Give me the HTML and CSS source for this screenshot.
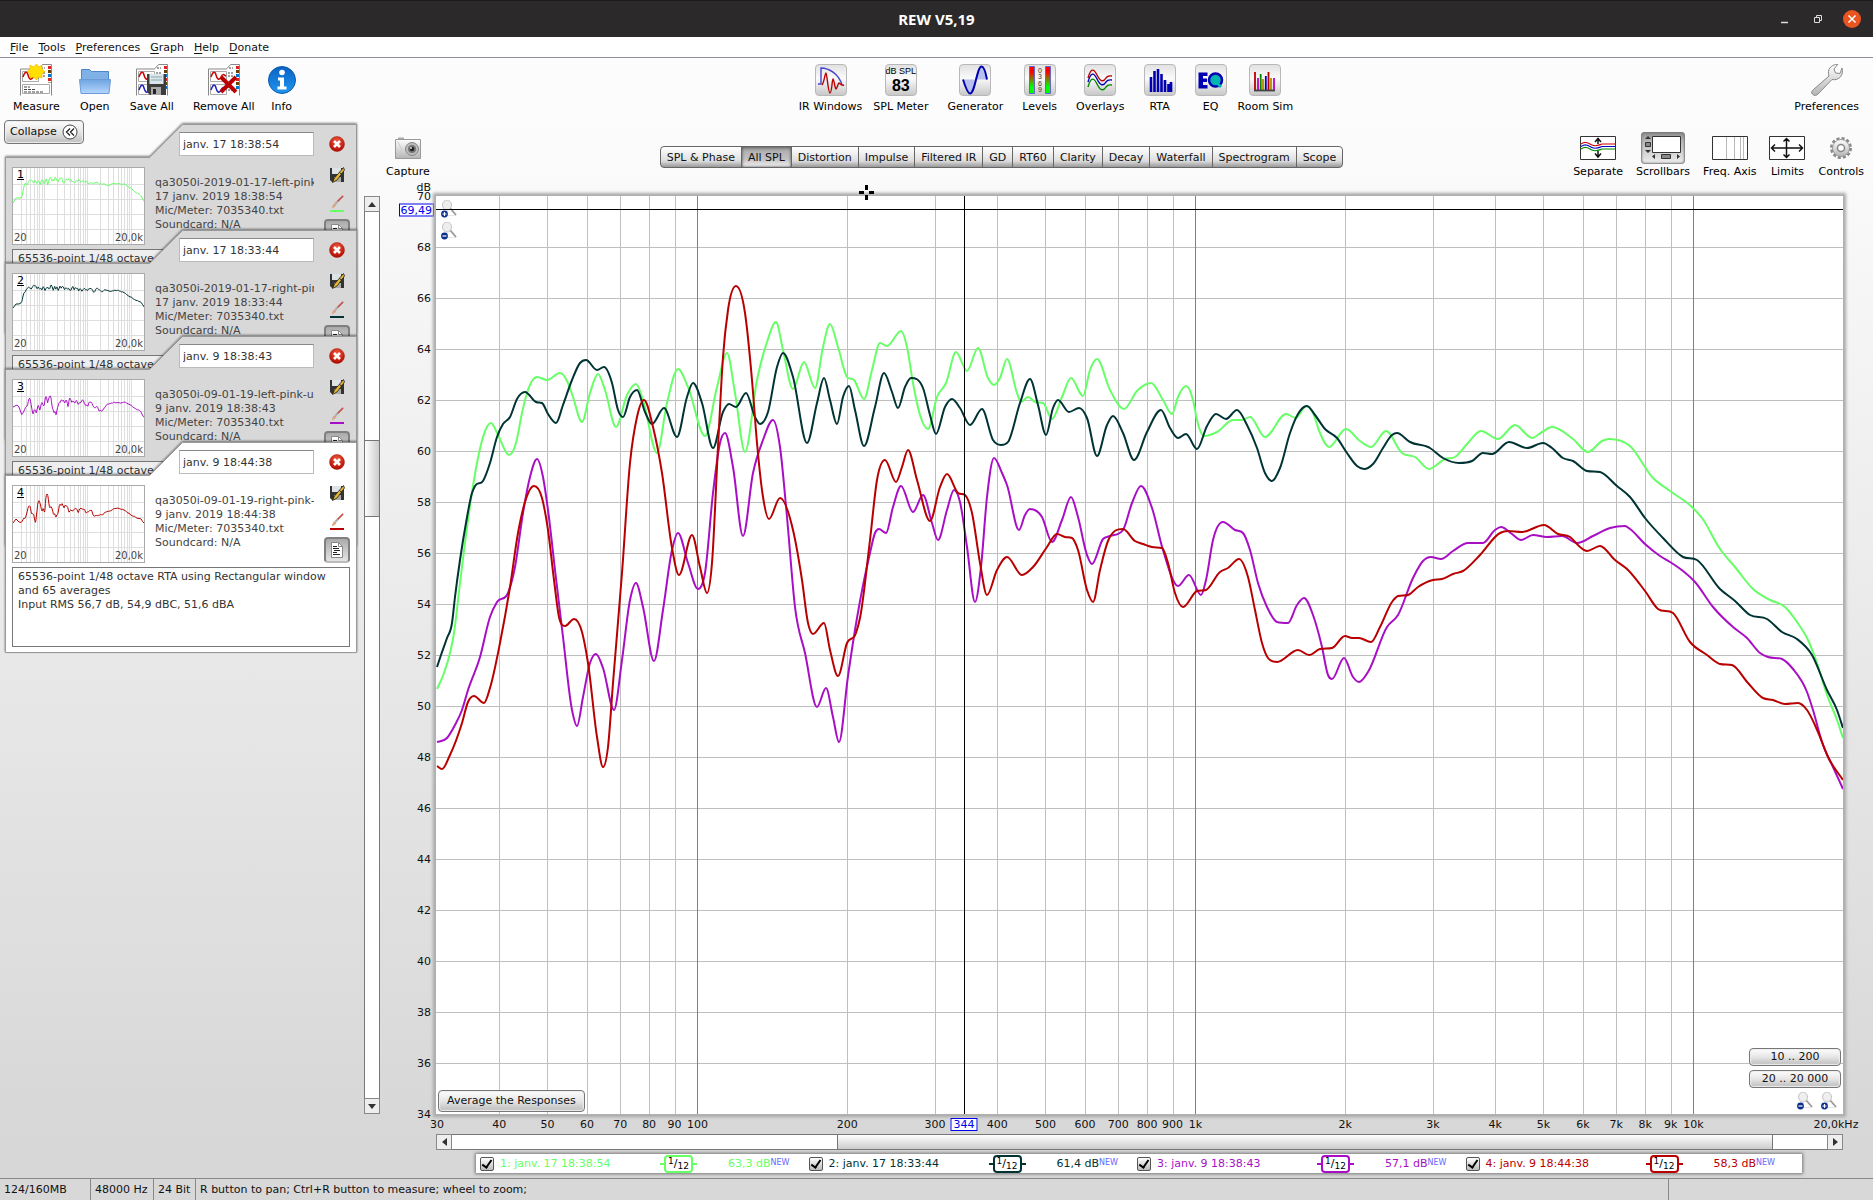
FILE: index.html
```html
<!DOCTYPE html>
<html lang="en">
<head>
    <meta charset="UTF-8">
    <meta name="viewport" content="width=device-width, initial-scale=1.0">
    <title>REW V5,19</title>
    <link rel="stylesheet" href="styles.css">
</head>
<body>

    <!-- Shared icons -->
    <svg class="defs" width="0" height="0">
        <defs>
            <linearGradient id="gMetal" x1="0" y1="0" x2="0" y2="1">
                <stop offset="0" stop-color="#fff"/><stop offset="1" stop-color="#b4b4b4"/>
            </linearGradient>
            <linearGradient id="gFolder" x1="0" y1="0" x2="0" y2="1">
                <stop offset="0" stop-color="#6fa4e0"/><stop offset="1" stop-color="#b4d6ff"/>
            </linearGradient>
            <linearGradient id="gInfo" x1="0" y1="0" x2="0" y2="1">
                <stop offset="0" stop-color="#0a62c4"/><stop offset="1" stop-color="#1f96ee"/>
            </linearGradient>
            <linearGradient id="gLevel" x1="0" y1="0" x2="0" y2="1">
                <stop offset="0.2" stop-color="#f00"/><stop offset="0.75" stop-color="#0f0"/>
            </linearGradient>
            <radialGradient id="gDelete" cx="0.5" cy="0.3" r="0.7">
                <stop offset="0" stop-color="#f0583c"/><stop offset="1" stop-color="#b00800"/>
            </radialGradient>
        </defs>
        <symbol id="i-sheet" viewBox="0 0 32 32">
            <path d="M.5 31.500V5h18l4-4.500h9v31" fill="#fff" stroke="#888"/>
            <path d="M2.500 7.500h16v10h-16zM2.500 20.500h16v10h-16z" fill="none" stroke="#aaa"/>
            <path d="M3 13c2-6 4-6 5-2s3 6 5 2 3-2 5-1" fill="none" stroke="#c00" stroke-width="1.500"/>
            <path d="M3 26c2-6 4-6 5-2s3 6 5 2 3-2 5-1" fill="none" stroke="#22b" stroke-width="1.500"/>
            <path d="M21 4h4M20 9h5M20 12h6M20 23h5M20 26h6" stroke="#444" stroke-dasharray="2 1"/>
            <path d="M28 3.500h3M28 15.500h3" stroke="#d22" stroke-width="3"/>
            <path d="M28 7.500h3M28 19.500h3" stroke="#640" stroke-width="3"/>
            <path d="M28 11.500h3M28 23.500h3" stroke="#07c" stroke-width="3"/>
        </symbol>
        <symbol id="i-delete" viewBox="0 0 16 16">
            <circle cx="8" cy="8" r="7.500" fill="url(#gDelete)" stroke="#a02010" stroke-width=".5"/>
            <path d="M5 5l6 6M11 5l-6 6" stroke="#fff" stroke-width="2.600"/>
        </symbol>
        <symbol id="i-save" viewBox="0 0 16 16">
            <path d="M1 1h14v14H3l-2-2z" fill="#333"/>
            <path d="M3 1h9v6H3z" fill="#dde3e6"/>
            <path d="M5 10h7v5H5z" fill="#aaa"/>
            <path d="M14.500 0.500L5.500 11l-2 4.500 4.500-2.500 7.500-10z" fill="#e8b830" stroke="#222" stroke-width=".8"/>
            <path d="M10.500 5.500l2.500 1.800" stroke="#222"/>
        </symbol>
        <symbol id="i-brush" viewBox="0 0 16 16">
            <path d="M2 15c1-3 1-5 4-6l1.500 1.500C7 13 4 14.500 2 15z" fill="#d9a58a"/>
            <path d="M6.500 9.500l3-3" stroke="#aaa" stroke-width="2.500"/>
            <path d="M9 7L15 1" stroke="#c3504a" stroke-width="1.800"/>
        </symbol>
        <symbol id="i-doc" viewBox="0 0 16 16">
            <path d="M2.500.5h7l4 4v11h-11z" fill="#fff" stroke="#888"/>
            <path d="M9.500.5v4h4" fill="none" stroke="#888"/>
            <path d="M4 4.500h4M4 6.500h6M5 8.500h6M4 10.500h4M4 12.500h7" stroke="#222"/>
        </symbol>
        <symbol id="i-lens" viewBox="0 0 16 16">
            <path d="M9 8l6 7" stroke="#999" stroke-width="1.800"/>
            <path d="M5 16h10" stroke="#ccc"/>
            <ellipse cx="6" cy="5" rx="4.500" ry="5" fill="#eee" stroke="#c4c4c4"/>
        </symbol>
        <symbol id="i-zoomin" viewBox="0 0 16 18">
            <use href="#i-lens" width="16" height="16"/>
            <circle cx="3.500" cy="14" r="3.400" fill="#0a2f8c"/>
            <path d="M1.500 14h4M3.500 12v4" stroke="#fff" stroke-width="1.200"/>
        </symbol>
        <symbol id="i-zoomout" viewBox="0 0 16 18">
            <use href="#i-lens" width="16" height="16"/>
            <circle cx="3.500" cy="14" r="3.400" fill="#0a2f8c"/>
            <path d="M1.500 14h4" stroke="#fff" stroke-width="1.200"/>
        </symbol>
        <symbol id="i-tab" viewBox="0 0 353 211" preserveAspectRatio="none">
            <path d="M.5 210.500V33.500H145L178 .5H352.500V210.500z" stroke="#999"/>
        </symbol>
    </svg>

    <header class="titlebar">
        <h1>REW V5,19</h1>
        <div class="window-buttons">
            <button aria-label="Minimize"><svg width="10" height="10"><path d="M1 8.500h7" stroke="#ddd" stroke-width="1.500"/></svg></button>
            <button aria-label="Restore"><svg width="10" height="10"><path d="M3.500 3V1.500h5v5H7M1.500 3.500h5v5h-5z" fill="none" stroke="#ddd"/></svg></button>
            <button class="close" aria-label="Close"><svg width="10" height="10"><path d="M1.500 1.500l7 7M8.500 1.500l-7 7" stroke="#fff" stroke-width="1.500"/></svg></button>
        </div>
    </header>

    <nav class="menubar">
        <a href="#"><u>F</u>ile</a>
        <a href="#"><u>T</u>ools</a>
        <a href="#"><u>P</u>references</a>
        <a href="#"><u>G</u>raph</a>
        <a href="#"><u>H</u>elp</a>
        <a href="#"><u>D</u>onate</a>
    </nav>

    <div class="toolbar">
        <div class="tools tools-left">
            <button class="tool">
                <svg width="32" height="32"><use href="#i-sheet"/><path d="M1 18.500h30v12.500H1z" fill="#fff"/><path d="M2.500 20.500h27v9h-27z" fill="#fff" stroke="#aaa"/><path d="M4 23h6M4 25.500h12M4 28h20" stroke="#444" stroke-dasharray="3 1"/><path d="M16.500 0l2 3 3.500-2v4l3 2.500-3 2.500v4l-3.500-1-2 3-3-3-3.500 1v-4L7 7.500 10 5V1l3.500 2z" fill="#ffe000" stroke="#f0b000" stroke-width=".6"/></svg>
                Measure
            </button>
            <button class="tool">
                <svg width="32" height="32"><path d="M2.500 26V5.500h8l2 2h17V26z" fill="#7fb0e6" stroke="#4f86c6"/><path d="M.5 15.500h31l-1.500 14H2z" fill="url(#gFolder)" stroke="#6b9bd8"/></svg>
                Open
            </button>
            <button class="tool">
                <svg width="32" height="32"><use href="#i-sheet"/><path d="M11 10h19v21H14l-3-3z" fill="#3d3d3d"/><path d="M13.500 10h14v10h-14z" fill="#dbe6ec"/><path d="M15 13h11M15 16h11" stroke="#8aa"/><path d="M15 23h10v8H15z" fill="#aaa"/><path d="M17 25h3v5h-3z" fill="#222"/></svg>
                Save All
            </button>
            <button class="tool">
                <svg width="32" height="32"><use href="#i-sheet"/><path d="M13 13l15 15M28 13L13 28" stroke="#b80000" stroke-width="4"/></svg>
                Remove All
            </button>
            <button class="tool near">
                <svg width="32" height="32"><circle cx="16" cy="16" r="13.500" fill="url(#gInfo)" stroke="#0a5ab0"/><circle cx="16" cy="8.500" r="2.800" fill="#fff"/><path d="M12 13.500h6v9h2.500v3h-9v-3H14v-6h-2z" fill="#fff"/></svg>
                Info
            </button>
        </div>

        <div class="tools tools-center">
            <button class="tool">
                <span class="plate"><svg width="28" height="30"><path d="M1 19h3V3c8 0 18 6 21 17" fill="none" stroke="#44c" stroke-width="1.400"/><path d="M5 20c2-2 3-12 4-12s2 20 4 20 2-14 3-14 2 10 3 10 2-6 3-6 2 3 5 2" fill="none" stroke="#b00" stroke-width="1.400"/></svg></span>
                IR Windows
            </button>
            <button class="tool near">
                <span class="plate spl"><small>dB SPL</small><b>83</b></span>
                SPL Meter
            </button>
            <button class="tool">
                <span class="plate"><svg width="28" height="30"><path d="M2 14.500h12C12 24 11 28 9 28S4 22 2 14.500zM14 14.500h12C24 6 22 1.500 20.500 1.500S16 6 14 14.500z" fill="#b8c0ee"/><path d="M2 14.500C5 24 7 28.500 9 28.500c5 0 7-27 11.500-27 2 0 4 5 5.500 13" fill="none" stroke="#0000b0" stroke-width="2"/></svg></span>
                Generator
            </button>
            <button class="tool">
                <span class="plate"><svg width="28" height="30"><path d="M3.500 1.500h5v27h-5zM19.500 1.500h5v27h-5z" fill="url(#gLevel)" stroke="#66c"/><g font-size="7" fill="#333" font-family="Liberation Sans, sans-serif"><text x="12" y="8">0</text><text x="12" y="14">3</text><text x="12" y="21">6</text><text x="12" y="27">9</text></g></svg></span>
                Levels
            </button>
            <button class="tool">
                <span class="plate"><svg width="28" height="30" fill="none" stroke-width="1.400"><path d="M2 13c3-11 6-9 9-3s6 8 9 3c2-3 4-2 6-2" stroke="#b00"/><path d="M2 17c3-11 6-9 9-3s6 8 9 3c2-3 4-2 6-2" stroke="#00b"/><path d="M2 22c3-11 6-9 9-3s6 8 9 3c2-3 4-2 6-2" stroke="#080"/></svg></span>
                Overlays
            </button>
            <button class="tool">
                <span class="plate"><svg width="28" height="30"><path d="M5 27V12M8.500 27V6M12 27V4M15.500 27V9M19 27V15M22.500 27V19M25 27V17" stroke="#0000b0" stroke-width="2.600"/></svg></span>
                RTA
            </button>
            <button class="tool">
                <span class="plate"><svg width="28" height="30"><path d="M1.500 7.500h9v3.500H6v2.500h4v3.500H6v3h4.500v3.500h-9z" fill="#0000b0"/><circle cx="18.500" cy="15" r="6.500" fill="#00b4b4" stroke="#0000b0" stroke-width="2.500"/><path d="M19 17l5 5" stroke="#00b4b4" stroke-width="3"/></svg></span>
                EQ
            </button>
            <button class="tool near">
                <span class="plate"><svg width="28" height="30" stroke-width="1.800"><path d="M4 25V7M17.500 25V7" stroke="#b80000"/><path d="M7 25V13M23 25V13" stroke="#b0b"/><path d="M9.700 25V9" stroke="#080"/><path d="M12 25V14M20 25V13" stroke="#b80"/><path d="M14.800 25V11" stroke="#00b"/><path d="M3 25.500h21" stroke="#444"/></svg></span>
                Room Sim
            </button>
        </div>

        <div class="tools">
            <button class="tool">
                <svg width="34" height="32"><path d="M3.500 31c-3-2-2-4 0-5.500L19 12c-2-6 1-11 9-12l-4 5 1.500 4 4.500.5L32 4c2 7-3 13-10 11.500L8 30c-1.500 1.500-3 2-4.500 1z" fill="url(#gMetal)" stroke="#888"/></svg>
                Preferences
            </button>
        </div>
    </div>

    <main class="main">
        <aside class="sidebar">
            <button class="btn collapse">Collapse
                <svg width="16" height="16"><circle cx="8" cy="8" r="7" fill="#fff" stroke="#444"/><path d="M8 4.500L4.500 8 8 11.500M12 4.500L8.500 8l3.500 3.500" fill="none" stroke="#222" stroke-width="1.300"/></svg>
            </button>

            <div class="cards">
                <section class="card">
                    <svg class="shape"><use href="#i-tab"/></svg>
                    <input class="name" type="text" value="janv. 17 18:38:54" aria-label="Measurement 1 name">
                    <div class="thumb"><b>1</b><svg data-curve="0"></svg><span>20</span><span>20,0k</span></div>
                    <p class="info">qa3050i-2019-01-17-left-pink<br>17 janv. 2019 18:38:54<br>Mic/Meter: 7035340.txt<br>Soundcard: N/A</p>
                    <div class="actions">
                        <button aria-label="Delete"><svg width="16" height="16"><use href="#i-delete"/></svg></button>
                        <button aria-label="Save"><svg width="16" height="16"><use href="#i-save"/></svg></button>
                        <button class="brush green" aria-label="Colour"><svg width="14" height="14"><use href="#i-brush"/></svg></button>
                        <button class="notes" aria-label="Notes"><svg width="16" height="16"><use href="#i-doc"/></svg></button>
                    </div>
                    <textarea aria-label="Notes 1">65536-point 1/48 octave RTA using Rectangular window and 65 averages</textarea>
                </section>

                <section class="card">
                    <svg class="shape"><use href="#i-tab"/></svg>
                    <input class="name" type="text" value="janv. 17 18:33:44" aria-label="Measurement 2 name">
                    <div class="thumb"><b>2</b><svg data-curve="1"></svg><span>20</span><span>20,0k</span></div>
                    <p class="info">qa3050i-2019-01-17-right-pink<br>17 janv. 2019 18:33:44<br>Mic/Meter: 7035340.txt<br>Soundcard: N/A</p>
                    <div class="actions">
                        <button aria-label="Delete"><svg width="16" height="16"><use href="#i-delete"/></svg></button>
                        <button aria-label="Save"><svg width="16" height="16"><use href="#i-save"/></svg></button>
                        <button class="brush dark" aria-label="Colour"><svg width="14" height="14"><use href="#i-brush"/></svg></button>
                        <button class="notes" aria-label="Notes"><svg width="16" height="16"><use href="#i-doc"/></svg></button>
                    </div>
                    <textarea aria-label="Notes 2">65536-point 1/48 octave RTA using Rectangular window and 65 averages</textarea>
                </section>

                <section class="card">
                    <svg class="shape"><use href="#i-tab"/></svg>
                    <input class="name" type="text" value="janv. 9 18:38:43" aria-label="Measurement 3 name">
                    <div class="thumb"><b>3</b><svg data-curve="2"></svg><span>20</span><span>20,0k</span></div>
                    <p class="info">qa3050i-09-01-19-left-pink-un<br>9 janv. 2019 18:38:43<br>Mic/Meter: 7035340.txt<br>Soundcard: N/A</p>
                    <div class="actions">
                        <button aria-label="Delete"><svg width="16" height="16"><use href="#i-delete"/></svg></button>
                        <button aria-label="Save"><svg width="16" height="16"><use href="#i-save"/></svg></button>
                        <button class="brush purple" aria-label="Colour"><svg width="14" height="14"><use href="#i-brush"/></svg></button>
                        <button class="notes" aria-label="Notes"><svg width="16" height="16"><use href="#i-doc"/></svg></button>
                    </div>
                    <textarea aria-label="Notes 3">65536-point 1/48 octave RTA using Rectangular window and 65 averages</textarea>
                </section>

                <section class="card active">
                    <svg class="shape"><use href="#i-tab"/></svg>
                    <input class="name" type="text" value="janv. 9 18:44:38" aria-label="Measurement 4 name">
                    <div class="thumb"><b>4</b><svg data-curve="3"></svg><span>20</span><span>20,0k</span></div>
                    <p class="info">qa3050i-09-01-19-right-pink-<br>9 janv. 2019 18:44:38<br>Mic/Meter: 7035340.txt<br>Soundcard: N/A</p>
                    <div class="actions">
                        <button aria-label="Delete"><svg width="16" height="16"><use href="#i-delete"/></svg></button>
                        <button aria-label="Save"><svg width="16" height="16"><use href="#i-save"/></svg></button>
                        <button class="brush red" aria-label="Colour"><svg width="14" height="14"><use href="#i-brush"/></svg></button>
                        <button class="notes" aria-label="Notes"><svg width="16" height="16"><use href="#i-doc"/></svg></button>
                    </div>
                    <textarea aria-label="Notes 4">65536-point 1/48 octave RTA using Rectangular window and 65 averages
Input RMS 56,7 dB, 54,9 dBC, 51,6 dBA</textarea>
                </section>
            </div>
        </aside>

        <div class="vscroll">
            <button aria-label="Scroll up"><svg width="8" height="5"><path d="M4 0l4 5H0z" fill="#333"/></svg></button>
            <div class="track"><div class="handle"></div></div>
            <button aria-label="Scroll down"><svg width="8" height="5"><path d="M4 5l4-5H0z" fill="#333"/></svg></button>
        </div>

        <section class="graph">
            <div class="graph-head">
                <button class="tool capture">
                    <svg width="26" height="22" viewBox="0 0 26 22"><path d="M3.500 3V1h5v2" fill="#ccc" stroke="#999"/><path d="M.5 2.500h25v19H.5z" fill="url(#gMetal)" stroke="#999"/><path d="M2.500 4l4 8-4 8" fill="none" stroke="#ccc"/><circle cx="17" cy="12" r="6.500" fill="#bbb" stroke="#888"/><circle cx="17" cy="12" r="4" fill="#777"/><circle cx="17" cy="12" r="2.300" fill="#222"/><circle cx="16" cy="11" r="1" fill="#ddd"/></svg>
                    Capture
                </button>
                <div class="tabs">
                    <button>SPL &amp; Phase</button>
                    <button class="on">All SPL</button>
                    <button>Distortion</button>
                    <button>Impulse</button>
                    <button>Filtered IR</button>
                    <button>GD</button>
                    <button>RT60</button>
                    <button>Clarity</button>
                    <button>Decay</button>
                    <button>Waterfall</button>
                    <button>Spectrogram</button>
                    <button>Scope</button>
                </div>
                <div class="tools graph-tools">
                    <button class="tool">
                        <svg width="44" height="32"><path d="M4.500 4.500h35v23h-35z" fill="#fff" stroke="#333"/><g fill="none" stroke-width="1.200"><path d="M5 12c5-3 7-1 11 1s7 0 10-1h13" stroke="#c00"/><path d="M5 14.500c5-3 7-1 11 1s7 0 10-1h13" stroke="#00c"/><path d="M5 17c5-3 7-1 11 1s7 0 10-1h13" stroke="#080"/></g><path d="M22 12V7M22 19v6M19 10l3-3.500 3 3.500M19 21.500l3 3.500 3-3.500" fill="none" stroke="#111" stroke-width="1.500"/></svg>
                        Separate
                    </button>
                    <button class="tool">
                        <svg class="pressed" width="44" height="32"><path d="M11.500 4.500h28v16h-28z" fill="#fff" stroke="#333"/><path d="M4 7l3-3 3 3zM4 18l3 3 3-3zM14 22v5l-3-2.500zM36 22v5l3-2.500z" fill="#333"/><path d="M4.500 10.500h5v4h-5zM20.500 22.500h9v4h-9z" fill="#888" stroke="#333"/></svg>
                        Scrollbars
                    </button>
                    <button class="tool">
                        <svg width="44" height="32"><path d="M4.500 4.500h35v23h-35z" fill="#fff" stroke="#333"/><path d="M18.500 5v22M26.500 5v22M32.500 5v22M35.500 5v22" stroke="#bbb"/></svg>
                        Freq. Axis
                    </button>
                    <button class="tool">
                        <svg width="36" height="32"><path d="M.5 4.500h35v23H.5z" fill="#fff" stroke="#333"/><path d="M2.500 16h31M17.500 6.500v19M6 12.500L2.500 16 6 19.500M30 12.500l3.500 3.500-3.500 3.500M14.500 9.500l3-3 3 3M14.500 22.500l3 3 3-3" fill="none" stroke="#111" stroke-width="1.500"/></svg>
                        Limits
                    </button>
                    <button class="tool">
                        <svg width="24" height="32"><circle cx="12" cy="16" r="9.500" fill="none" stroke="#888" stroke-width="3" stroke-dasharray="3 2"/><circle cx="12" cy="16" r="8.500" fill="url(#gMetal)" stroke="#999"/><circle cx="12" cy="16" r="3.500" fill="#fff" stroke="#888" stroke-width="1.500"/></svg>
                        Controls
                    </button>
                </div>
            </div>

            <div class="plot-area">
                <div class="y-axis">
                    <span class="unit">dB</span>
                    <div id="yLabels"></div>
                    <span class="cursor-y">69,49</span>
                </div>
                <div class="plot">
                    <svg id="plot" viewBox="0 0 1407 918" preserveAspectRatio="none"></svg>
                    <div class="zoom-y">
                        <button aria-label="Zoom in vertically"><svg width="16" height="18"><use href="#i-zoomin"/></svg></button>
                        <button aria-label="Zoom out vertically"><svg width="16" height="18"><use href="#i-zoomout"/></svg></button>
                    </div>
                    <div class="crosshair"></div>
                    <button class="btn average">Average the Responses</button>
                    <div class="ranges">
                        <button class="btn">10 .. 200</button>
                        <button class="btn">20 .. 20 000</button>
                        <div class="zoom-x">
                            <button aria-label="Zoom out horizontally"><svg width="16" height="18"><use href="#i-zoomout"/></svg></button>
                            <button aria-label="Zoom in horizontally"><svg width="16" height="18"><use href="#i-zoomin"/></svg></button>
                        </div>
                    </div>
                    <svg class="pointer" width="15" height="15"><path d="M7.500 0v5M7.500 10v5M0 7.500h5M10 7.500h5" stroke="#000" stroke-width="3"/></svg>
                </div>
                <div class="x-axis" id="xLabels"></div>
                <div class="hscroll">
                    <button aria-label="Scroll left"><svg width="5" height="8"><path d="M0 4l5-4v8z" fill="#333"/></svg></button>
                    <div class="track"><div class="handle"></div></div>
                    <button aria-label="Scroll right"><svg width="5" height="8"><path d="M5 4L0 0v8z" fill="#333"/></svg></button>
                </div>
            </div>

            <div class="legend">
                <div class="entry green"><label><input type="checkbox" checked>1: janv. 17 18:38:54</label><span class="smooth"><sup>1</sup>/<sub>12</sub></span><span class="level">63,3 dB<i>NEW</i></span></div>
                <div class="entry dark"><label><input type="checkbox" checked>2: janv. 17 18:33:44</label><span class="smooth"><sup>1</sup>/<sub>12</sub></span><span class="level">61,4 dB<i>NEW</i></span></div>
                <div class="entry purple"><label><input type="checkbox" checked>3: janv. 9 18:38:43</label><span class="smooth"><sup>1</sup>/<sub>12</sub></span><span class="level">57,1 dB<i>NEW</i></span></div>
                <div class="entry red"><label><input type="checkbox" checked>4: janv. 9 18:44:38</label><span class="smooth"><sup>1</sup>/<sub>12</sub></span><span class="level">58,3 dB<i>NEW</i></span></div>
            </div>
        </section>
    </main>

    <footer class="statusbar">
        <span class="memory">124/160MB</span>
        <span class="rate">48000 Hz</span>
        <span class="bits">24 Bit</span>
        <span class="hint">R button to pan; Ctrl+R button to measure; wheel to zoom;</span>
        <span class="spare"></span>
    </footer>

    <script src="script.js"></script>
</body>
</html>
```

FILE: styles.css
```css
* {
    box-sizing: border-box;
}
body {
    margin: 0;
    display: flex;
    flex-direction: column;
    min-height: 100vh;
    font-family: "DejaVu Sans", Verdana, sans-serif;
    font-size: 11px;
    line-height: 14px;
    color: #111;
    background: linear-gradient(#fdfdfd, #fcfcfc 10%, #f2f2f2 33%, #e3e3e3 67%, #d7d7d7 95%);
}
button {
    margin: 0;
    padding: 0;
    border: none;
    background: none;
    font: inherit;
    color: inherit;
}
svg {
    display: block;
}
.defs {
    position: absolute;
}

.green { color: #66ff66; }
.dark { color: #003333; }
.purple { color: #a80fc4; }
.red { color: #b80000; }

/* Title bar */
.titlebar {
    display: grid;
    grid-template-columns: 1fr auto 1fr;
    align-items: center;
    height: 37px;
    background: #2c292a;
    border-top: 1px solid #1c1a1b;
    color: #fff;
}
.titlebar h1 {
    grid-column: 2;
    margin: 0;
    font: bold 15px/20px "Noto Sans", sans-serif;
}
.window-buttons {
    display: flex;
    justify-content: flex-end;
    align-items: center;
    gap: 18px;
    padding-right: 12px;
}
.window-buttons button {
    display: grid;
    place-items: center;
    width: 15px;
    height: 18px;
}
.window-buttons .close {
    width: 18px;
    border-radius: 50%;
    background: #e95420;
}

/* Menu */
.menubar {
    display: flex;
    gap: 10px;
    height: 21px;
    padding: 4px 10px 0;
    background: #fff;
    border-bottom: 1px solid #8f8f9f;
}
.menubar a {
    color: #111;
    text-decoration: none;
}
.menubar u {
    text-underline-offset: 2px;
}

/* Toolbar */
.toolbar {
    display: flex;
    justify-content: space-between;
    padding: 6px 14px 0 13px;
    height: 62px;
}
.tools {
    display: flex;
    gap: 19px;
}
.tool {
    display: flex;
    flex-direction: column;
    align-items: center;
    gap: 4px;
    color: #000;
    white-space: nowrap;
}
.tool.near {
    margin-left: -8px;
}
.plate {
    display: flex;
    flex-direction: column;
    align-items: center;
    justify-content: center;
    width: 32px;
    height: 32px;
    border: 1px solid #b8b8b8;
    border-radius: 4px;
    background: linear-gradient(#e2e2e2, #fafafa 45%, #c8c8c8);
}
.spl {
    font-family: "Liberation Sans", Arial, sans-serif;
}
.spl small {
    font-size: 9px;
    line-height: 11px;
}
.spl b {
    font-size: 16px;
    line-height: 17px;
}

/* Buttons */
.btn {
    border: 1px solid #777;
    border-radius: 4px;
    background: linear-gradient(#fdfdfd, #e6e6e6 50%, #bcbcbc);
    box-shadow: inset 0 0 1px 1px #eee;
}

.main {
    flex: 1;
    display: flex;
}

/* Measurement list */
.sidebar {
    width: 359px;
    padding: 0 2px 0 4px;
}
.collapse {
    display: flex;
    align-items: center;
    gap: 5px;
    height: 24px;
    padding: 0 5px;
}
.cards {
    margin-top: -20px;
}
.card {
    position: relative;
    display: grid;
    grid-template-columns: 133px 1fr 26px;
    grid-template-rows: 24px 78px 80px;
    row-gap: 11px;
    column-gap: 10px;
    height: 211px;
    margin-left: 1px;
    padding: 8px 7px;
    pointer-events: none;
    color: #444;
}
.card > * {
    pointer-events: auto;
    position: relative;
}
.card + .card {
    margin-top: -105px;
}
.card .shape {
    position: absolute;
    left: 0;
    top: 0;
    width: 100%;
    height: 100%;
    overflow: visible;
    fill: #d8d8d8;
    filter: drop-shadow(0 -1px 1px rgba(0, 0, 0, 0.5));
}
.card.active .shape {
    fill: #fff;
}
.name {
    grid-column: 2;
    justify-self: end;
    width: 135px;
    height: 24px;
    padding: 0 3px;
    border: 1px solid #bbb;
    border-top-color: #888;
    background: #fff;
    font: inherit;
    color: #333;
}
.thumb {
    grid-row: 2;
    height: 78px;
    border: 1px solid #aaa;
    background: #fff;
    display: flex;
    justify-content: space-between;
    align-items: flex-end;
    padding: 0 1px;
    line-height: 12px;
    font-size: 10px;
}
.thumb svg {
    position: absolute;
    inset: 0;
    width: 100%;
    height: 100%;
}
.thumb b,
.thumb span {
    position: relative;
    z-index: 1;
}
.thumb b {
    position: absolute;
    left: 4px;
    top: 1px;
    font-weight: normal;
    font-size: 11px;
    text-decoration: underline;
    color: #000;
}
.info {
    grid-row: 2;
    grid-column: 2;
    margin: 0;
    padding-top: 9px;
    overflow: hidden;
    white-space: nowrap;
}
.actions {
    grid-row: 1 / 3;
    grid-column: 3;
    display: flex;
    flex-direction: column;
    align-items: center;
    justify-content: space-between;
}
.actions button {
    display: grid;
    place-items: center;
    width: 26px;
    height: 24px;
}
.actions .brush {
    width: 14px;
    height: 18px;
    border-bottom: 2px solid;
}
.actions .notes {
    height: 26px;
    border: 2px solid #808080;
    border-bottom-color: #bbb;
    border-radius: 4px;
    background: linear-gradient(#aaa, #e4e4e4);
}
.card textarea {
    grid-row: 3;
    grid-column: 1 / 4;
    width: 100%;
    height: 80px;
    margin-top: -7px;
    padding: 2px 5px;
    border: 1px solid #777;
    background: #fff;
    resize: none;
    overflow: hidden;
    font: inherit;
    color: #333;
}
.card:not(.active) textarea {
    background: #eee;
}

/* Scrollbars */
.vscroll,
.hscroll {
    display: flex;
    border: 1px solid #777;
    background: #fff;
}
.vscroll {
    flex-direction: column;
    width: 16px;
    margin: 76px 0 64px 5px;
}
.vscroll button,
.hscroll button {
    display: grid;
    place-items: center;
    flex: none;
    width: 14px;
    height: 14px;
    background: #eee;
    outline: 1px solid #888;
}
.track {
    flex: 1;
    display: flex;
}
.vscroll .track {
    flex-direction: column;
    padding-top: 229px;
}
.vscroll .handle {
    height: 77px;
    border: solid #777;
    border-width: 1px 0;
    background: linear-gradient(90deg, #fff, #ccc);
}
.hscroll .handle {
    width: 68%;
    margin-left: 28%;
    border: solid #777;
    border-width: 0 1px;
    background: linear-gradient(#fff, #ccc);
}

/* Graph */
.graph {
    flex: 1;
    display: flex;
    flex-direction: column;
    min-width: 0;
}
.graph-head {
    display: flex;
    justify-content: space-between;
    align-items: flex-start;
    height: 76px;
    padding: 12px 9px 0 6px;
}
.capture {
    gap: 6px;
    padding-top: 5px;
}
.tabs {
    display: flex;
    margin-top: 14px;
    border: 1px solid #666;
    border-radius: 4px;
    overflow: hidden;
    background: linear-gradient(#fff, #ddd 70%, #999);
}
.tabs button {
    height: 20px;
    padding: 1px 6px 0;
    white-space: nowrap;
}
.tabs button + button {
    border-left: 1px solid #666;
}
.tabs .on {
    background: linear-gradient(#909090, #b4b4b4 25%, #c0c0c0 60%, #f4f4f4);
    box-shadow: inset 0 0 3px #444;
}
.graph-tools {
    gap: 13px;
}
.graph-tools .tool {
    gap: 1px;
}
.pressed {
    border-radius: 4px;
    background: linear-gradient(#888, #bbb 30%, #eee);
    box-shadow: inset 0 0 2px 1px #777;
}
.plot-area {
    flex: 1;
    display: grid;
    grid-template-columns: 56px 1fr;
    grid-template-rows: 1fr 20px 16px;
    padding-right: 30px;
}
.y-axis {
    position: relative;
}
.y-axis span,
.x-axis span {
    position: absolute;
}
.y-axis span {
    right: 5px;
    margin-top: 1px;
    transform: translateY(-50%);
}
.y-axis .unit {
    top: -9px;
}
.y-axis .cursor-y,
.x-axis .cursor-x {
    border: 1px solid #0000f0;
    background: #fff;
    color: #0000f0;
    line-height: 11px;
}
.y-axis .cursor-y {
    top: 13px;
    right: 2px;
    padding: 0 1px;
}
.plot {
    position: relative;
    background: #fff;
    box-shadow: 0 0 0 1px #b0b0b0, 0 0 3px 3px #a8a8a8;
}
#plot {
    position: absolute;
    inset: 0;
    width: 100%;
    height: 100%;
}
#plot path,
.thumb path {
    fill: none;
    vector-effect: non-scaling-stroke;
}
.grid {
    stroke: #bfbfbf;
    shape-rendering: crispEdges;
}
.thumb .grid {
    stroke: #dedede;
}
.decade {
    stroke: #808080;
    shape-rendering: crispEdges;
}
.curve {
    stroke: currentColor;
    stroke-width: 2px;
    stroke-linejoin: round;
}
.thumb .curve {
    stroke-width: 1px;
}
.crosshair::before,
.crosshair::after {
    content: "";
    position: absolute;
    background: #000;
}
.crosshair::before {
    left: 0;
    right: 0;
    top: 13px;
    height: 1px;
}
.crosshair::after {
    left: 528px;
    top: 0;
    bottom: 0;
    width: 1px;
}
.zoom-y {
    position: absolute;
    left: 5px;
    top: 4px;
    display: grid;
    gap: 4px;
}
.average {
    position: absolute;
    left: 2px;
    bottom: 2px;
    height: 22px;
    padding: 0 8px;
}
.ranges {
    position: absolute;
    right: 2px;
    bottom: 4px;
    display: grid;
    gap: 4px;
    width: 92px;
}
.ranges .btn {
    height: 18px;
}
.zoom-x {
    display: flex;
    justify-content: flex-end;
    gap: 8px;
    padding-right: 4px;
}
.pointer {
    position: absolute;
    left: 423px;
    top: -11px;
}
.x-axis {
    grid-column: 2;
    position: relative;
}
.x-axis span {
    top: 4px;
    transform: translateX(-50%);
    white-space: nowrap;
}
.x-axis .cursor-x {
    padding: 0 2px;
}
.hscroll {
    grid-column: 2;
}

/* Legend */
.legend {
    display: grid;
    grid-template-columns: repeat(4, 1fr);
    margin: 4px 71px 5px 96px;
    padding: 0 8px 0 4px;
    height: 19px;
    background: #fff;
    box-shadow: 0 0 3px 1px #777;
}
.entry {
    display: grid;
    grid-template-columns: 180px 68px 1fr;
    align-items: center;
}
.entry label {
    display: flex;
    align-items: center;
    gap: 6px;
}
.entry input {
    appearance: none;
    display: grid;
    place-items: center;
    width: 14px;
    height: 14px;
    margin: 0;
    border: 1px solid #555;
    border-radius: 2px;
    background: linear-gradient(#fff, #bbb);
}
.entry input:checked::before {
    content: "";
    width: 4px;
    height: 8px;
    margin-bottom: 2px;
    border: solid #000;
    border-width: 0 2px 2px 0;
    transform: rotate(35deg);
}
.smooth {
    position: relative;
    justify-self: start;
    display: flex;
    align-items: center;
    justify-content: center;
    width: 29px;
    height: 18px;
    margin-left: 4px;
    border: 2px solid;
    border-radius: 4px;
    line-height: 12px;
    -webkit-text-fill-color: #000;
}
.smooth::before,
.smooth::after {
    content: "";
    position: absolute;
    top: 6px;
    width: 4px;
    height: 2px;
    background: currentColor;
}
.smooth::before { left: -6px; }
.smooth::after { right: -6px; }
.smooth sup,
.smooth sub {
    font-size: 9px;
    line-height: 9px;
}
.smooth sup { align-self: flex-start; }
.smooth sub { align-self: flex-end; }
.level {
    display: flex;
}
.level i {
    font-style: normal;
    font-size: 8px;
    line-height: 12px;
    color: #6666ff;
}

/* Status bar */
.statusbar {
    display: flex;
    height: 22px;
    border-top: 1px solid #888;
    background: #d8d8d8;
    line-height: 21px;
}
.statusbar span {
    padding-left: 4px;
    border-right: 1px solid #888;
}
.memory { width: 91px; }
.rate { width: 63px; }
.bits { width: 42px; }
.hint { flex: 1; }
.statusbar .spare {
    width: 204px;
    border: none;
}
```

FILE: script.js
```javascript
// Plot space is 1407 x 918: 30 Hz..20 kHz (498 per decade), 70..34 dB (25.5 per dB)
const W = 1407, H = 918, DECADE = 498;
const names = ["green", "dark", "purple", "red"];

const curves = [
    "1,493 8,477 14,457 18,437 24,387 32,324 41,267 47,241 55,227 62,239 73,259 80,247 86,217 91,197 101,181 111,184 124,177 132,187 137,201 146,226 154,197 162,178 169,194 180,231 191,199 200,188 207,204 221,257 231,207 242,173 252,191 269,240 281,191 291,157 299,197 309,256 321,184 331,146 340,126 347,154 357,193 368,166 379,192 387,151 394,128 402,151 411,181 418,184 428,203 436,174 444,147 451,150 465,135 471,151 477,187 484,219 492,233 501,201 510,187 520,156 531,175 542,152 552,182 558,189 564,182 571,163 581,197 585,206 592,201 599,206 607,207 616,223 626,201 635,182 647,200 654,174 661,163 674,194 688,213 701,195 715,187 727,204 736,218 742,201 750,190 757,204 761,224 768,240 781,236 797,224 806,224 814,221 829,241 850,218 860,222 870,210 877,217 884,237 893,251 910,233 924,245 935,251 950,235 966,257 979,261 993,273 1009,263 1019,261 1031,248 1045,235 1062,243 1079,229 1096,242 1106,236 1116,231 1137,243 1152,256 1166,245 1173,243 1194,250 1217,282 1234,295 1257,312 1266,322 1284,353 1299,371 1317,393 1334,404 1349,411 1361,426 1372,444 1381,467 1391,499 1401,524 1407,542",
    "1,471 5,459 11,442 16,427 19,401 24,364 30,327 36,297 39,290 47,285 54,267 61,241 67,228 74,221 81,203 89,196 100,206 106,207 112,218 120,227 127,209 136,184 144,167 150,164 161,174 168,171 176,187 182,214 187,221 194,201 201,194 209,216 216,228 228,212 241,241 251,201 257,187 266,207 277,252 287,216 293,208 300,211 310,197 319,221 324,228 332,216 341,171 347,157 357,181 371,247 381,207 388,182 394,204 401,228 407,201 413,190 419,214 428,250 439,211 448,177 456,196 462,212 469,191 475,182 487,192 494,219 500,238 509,211 516,203 524,212 534,229 546,213 557,244 565,249 572,246 584,207 594,183 602,209 610,239 617,212 622,204 633,216 643,212 651,222 661,260 671,229 677,220 687,237 698,264 711,236 725,214 734,232 742,242 750,238 761,253 771,230 780,218 790,223 801,214 811,229 821,252 829,277 836,285 844,272 854,237 862,218 871,210 879,219 889,233 901,242 911,257 921,270 928,273 937,268 947,252 956,239 961,237 974,246 994,252 1007,262 1023,267 1036,265 1047,257 1056,258 1073,246 1091,252 1107,247 1116,252 1127,262 1137,265 1151,275 1164,276 1181,290 1194,301 1209,322 1227,342 1247,361 1261,364 1284,393 1299,405 1314,419 1331,423 1346,436 1361,443 1376,459 1391,494 1401,514 1407,532",
    "1,546 11,542 19,529 26,514 32,494 44,461 54,421 61,406 72,397 79,371 87,317 94,281 101,263 107,281 112,314 119,374 127,441 136,514 141,530 147,501 154,467 160,458 167,472 178,514 186,464 194,404 200,387 207,411 218,465 227,414 236,354 242,337 252,367 262,393 269,377 277,297 284,247 289,237 297,271 307,340 317,277 327,244 337,224 344,251 351,321 359,411 369,457 381,511 390,492 397,521 403,546 412,480 421,422 434,357 439,337 443,333 450,337 457,311 465,290 477,316 487,299 496,327 502,344 511,314 518,294 524,306 531,351 539,406 545,371 551,301 558,262 566,277 571,289 583,334 589,319 594,313 606,321 616,346 626,324 635,301 642,321 651,359 656,368 667,343 674,340 687,334 696,307 705,290 716,312 727,354 742,390 753,379 765,399 770,384 777,344 787,326 799,334 807,337 814,354 822,387 831,411 841,426 852,427 861,409 868,402 877,419 886,451 892,479 896,483 908,462 917,481 923,486 932,476 951,431 962,419 977,382 987,365 995,361 1005,363 1017,355 1032,347 1047,347 1059,334 1065,331 1076,338 1085,344 1097,339 1111,341 1126,340 1141,347 1157,340 1174,332 1189,330 1194,333 1209,348 1224,360 1234,366 1247,375 1259,386 1277,411 1297,431 1311,442 1324,457 1332,461 1346,463 1357,473 1371,496 1377,514 1386,546 1397,571 1407,593",
    "1,570 6,573 14,559 26,527 32,506 38,500 48,507 54,492 64,447 74,391 82,337 89,306 98,290 106,302 112,334 118,384 123,421 129,430 138,423 146,436 152,467 161,541 167,571 172,551 177,487 186,377 194,267 201,221 208,204 217,231 226,277 236,352 243,379 256,339 264,371 271,397 276,367 282,251 287,161 292,114 300,90 309,117 316,184 321,247 327,301 333,323 344,302 357,334 366,384 372,427 377,438 388,427 394,454 402,480 411,447 420,437 424,422 434,344 441,284 449,264 460,286 466,271 472,254 481,284 494,325 504,291 511,278 522,297 529,299 536,317 544,367 551,399 561,374 571,361 586,379 597,371 611,351 621,338 629,341 636,342 642,354 651,394 657,406 664,374 672,345 687,333 699,345 707,348 716,351 726,352 732,367 739,397 747,411 761,395 770,394 784,376 792,372 803,363 812,381 819,414 826,447 832,462 841,466 862,454 873,459 884,453 896,452 909,440 916,442 923,442 935,446 944,431 956,406 962,400 972,399 982,391 997,384 1006,383 1017,378 1027,375 1044,359 1064,337 1072,335 1086,336 1108,329 1122,338 1134,341 1144,351 1151,355 1164,350 1179,364 1191,373 1209,395 1222,413 1237,417 1254,446 1271,459 1284,468 1296,469 1312,487 1327,502 1337,504 1349,508 1362,507 1371,514 1382,536 1392,561 1407,584"
].map(s => s.split(" ").map(p => p.split(",").map(Number)));

function xOf(f) {
    return Math.log10(f / 30) * DECADE;
}

// Cubic through the points, flat at each peak and dip so it does not overshoot
function smooth(pts) {
    const n = pts.length, d = [], m = [];
    for (let i = 0; i < n - 1; i++) {
        d.push((pts[i + 1][1] - pts[i][1]) / (pts[i + 1][0] - pts[i][0]));
    }
    m[0] = d[0];
    m[n - 1] = d[n - 2];
    for (let i = 1; i < n - 1; i++) {
        const a = pts[i][0] - pts[i - 1][0], b = pts[i + 1][0] - pts[i][0];
        const limit = 3 * Math.min(Math.abs(d[i - 1]), Math.abs(d[i]));
        const slope = (d[i - 1] * b + d[i] * a) / (a + b);
        m[i] = d[i - 1] * d[i] <= 0 ? 0 : Math.max(-limit, Math.min(limit, slope));
    }
    let path = "M" + pts[0];
    for (let i = 0; i < n - 1; i++) {
        const [x0, y0] = pts[i], [x1, y1] = pts[i + 1], h = (x1 - x0) / 3;
        path += `C${x0 + h},${y0 + m[i] * h} ${x1 - h},${y1 - m[i + 1] * h} ${x1},${y1}`;
    }
    return path;
}

// Main plot
let grid = "", decades = "";
for (let dec = 10; dec <= 10000; dec *= 10) {
    for (let k = 1; k < 10; k++) {
        const f = dec * k;
        if (f <= 30 || f >= 20000) continue;
        const line = `M${Math.round(xOf(f)) + 1.5},0V${H}`;
        if (k === 1) decades += line;
        else grid += line;
    }
}
for (let i = 1; i < 18; i++) {
    grid += `M0,${i * 51 + 0.5}H${W}`;
}
document.getElementById("plot").innerHTML =
    `<path class="grid" d="${grid}"/><path class="decade" d="${decades}"/>` +
    [0, 1, 2, 3].map(i => `<path class="curve ${names[i]}" d="${smooth(curves[i])}"/>`).join("");

// Axis labels
let y = "";
for (let db = 70; db >= 34; db -= 2) {
    y += `<span style="top:${(70 - db) / 36 * 100}%">${db}</span>`;
}
document.getElementById("yLabels").innerHTML = y;

let x = "";
[30, 40, 50, 60, 70, 80, 90, 100, 200, 300, 400, 500, 600, 700, 800, 900, 1000, 2000, 3000, 4000, 5000, 6000, 7000, 8000, 9000, 10000].forEach(f => {
    const text = f < 1000 ? f : f / 1000 + "k";
    x += `<span style="left:${(xOf(f) + 1) / W * 100}%">${text}</span>`;
});
x += `<span style="left:99.500%">20,0kHz</span>`;
x += `<span class="cursor-x" style="left:${528 / W * 100}%">344</span>`;
document.getElementById("xLabels").innerHTML = x;

// Thumbnails, 20 Hz..20 kHz
const leads = [[[0, 35], [3, 30], [6, 30]], [[0, 34], [3, 30], [6, 30]], [[0, 27], [4, 25], [6, 27]], [[0, 37], [3, 33], [6, 36]]];
document.querySelectorAll(".thumb svg").forEach(svg => {
    const i = Number(svg.dataset.curve);
    const pts = leads[i].concat(curves[i].filter(p => p[0] > 2).map(p => [7.7 + p[0] * 0.0877, 8 + (p[1] - 90) * 0.0588 - (i < 2 ? 1 : 0)]));
    let lines = "";
    for (let dec = 10; dec <= 10000; dec *= 10) {
        for (let k = 1; k < 10; k++) {
            if (dec * k > 20 && dec * k < 20000) lines += `M${Math.round(Math.log10(dec * k / 20) / 3 * 131) + 0.5},0V76`;
        }
    }
    for (let r = 0; r < 4; r++) {
        lines += `M0,${16.5 + r * 15}H131`;
    }
    svg.setAttribute("viewBox", "0 0 131 76");
    svg.setAttribute("preserveAspectRatio", "none");
    svg.innerHTML = `<path class="grid" d="${lines}"/><path class="curve ${names[i]}" d="M${pts.join("L")}"/>`;
});
```
